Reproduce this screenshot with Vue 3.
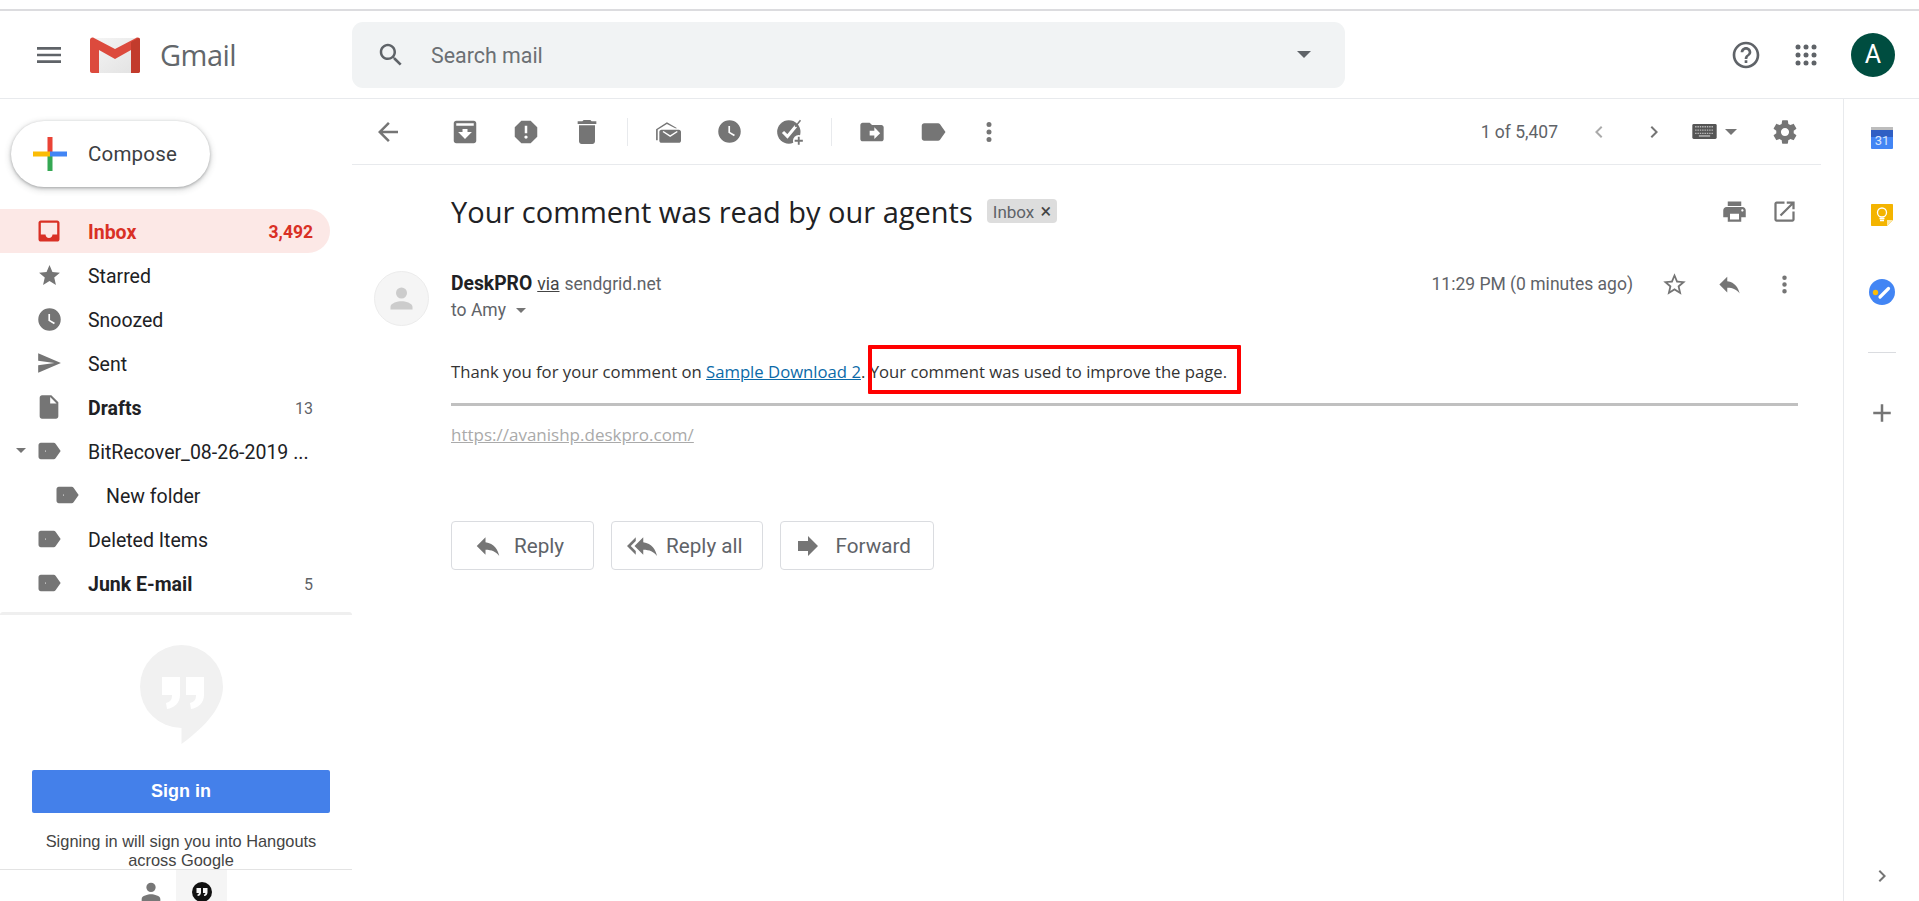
<script setup>
const paths = {
  menu: "M3 18h18v-2H3v2zm0-5h18v-2H3v2zm0-7v2h18V6H3z",
  search: "M15.5 14h-.79l-.28-.27C15.41 12.59 16 11.11 16 9.5 16 5.91 13.09 3 9.5 3S3 5.91 3 9.5 5.91 16 9.5 16c1.61 0 3.09-.59 4.23-1.57l.27.28v.79l5 4.99L20.49 19l-4.99-5zm-6 0C7.01 14 5 11.99 5 9.5S7.01 5 9.5 5 14 7.01 14 9.5 11.99 14 9.5 14z",
  help: "M11 18h2v-2h-2v2zm1-16C6.48 2 2 6.48 2 12s4.48 10 10 10 10-4.48 10-10S17.52 2 12 2zm0 18c-4.41 0-8-3.59-8-8s3.59-8 8-8 8 3.59 8 8-3.59 8-8 8zm0-14c-2.21 0-4 1.79-4 4h2c0-1.1.9-2 2-2s2 .9 2 2c0 2-3 1.75-3 5h2c0-2.25 3-2.5 3-5 0-2.21-1.79-4-4-4z",
  back: "M20 11H7.83l5.59-5.59L12 4l-8 8 8 8 1.41-1.41L7.83 13H20v-2z",
  archive: "M5 3h14c1.1 0 2 .9 2 2v14c0 1.1-.9 2-2 2H5c-1.1 0-2-.9-2-2V5c0-1.1.9-2 2-2zm0 2v2h14V5H5zm7 12.5l5.5-5.5H14V9.5h-4V12H6.5l5.5 5.5z",
  report: "M15.73 3H8.27L3 8.27v7.46L8.27 21h7.46L21 15.73V8.27L15.73 3zM12 17.3c-.72 0-1.3-.58-1.3-1.3 0-.72.58-1.3 1.3-1.3.72 0 1.3.58 1.3 1.3 0 .72-.58 1.3-1.3 1.3zm1-4.3h-2V7h2v6z",
  trash: "M6 19c0 1.1.9 2 2 2h8c1.1 0 2-.9 2-2V7H6v12zM19 4h-3.5l-1-1h-5l-1 1H5v2h14V4z",
  unread: "M6 10h16c1.1 0 2 .9 2 2v8c0 1.1-.9 2-2 2H6c-1.1 0-2-.9-2-2v-8c0-1.1.9-2 2-2zm1 2l7 4.5 7-4.5-.8-.9-6.2 3.9-6.2-3.9L7 12zM1 9.5L11 3l9.5 5.5h-1.8L11 4.5 2.5 10v9.5H1V9.5z",
  clock: "M12 2a10 10 0 1 0 0 20 10 10 0 0 0 0-20zm4 14.2l-5-3V7h1.5v5.4l4.3 2.5-.8 1.3z",
  task: "M11 2a10 10 0 1 0 0 20 10 10 0 0 0 0-20z",
  move: "M20 6h-8l-2-2H4c-1.1 0-1.99.9-1.99 2L2 18c0 1.1.9 2 2 2h16c1.1 0 2-.9 2-2V8c0-1.1-.9-2-2-2zm-6 12v-3h-4v-4h4V8l5 5-5 5z",
  label: "M17.63 5.84C17.27 5.33 16.67 5 16 5L5 5.01C3.9 5.01 3 5.9 3 7v10c0 1.1.9 1.99 2 1.99L16 19c.67 0 1.27-.33 1.63-.84L22 12l-4.37-6.16z",
  more: "M12 8a2 2 0 1 0 0-4 2 2 0 0 0 0 4zm0 2a2 2 0 1 0 0 4 2 2 0 0 0 0-4zm0 6a2 2 0 1 0 0 4 2 2 0 0 0 0-4z",
  prev: "M15.41 7.41L14 6l-6 6 6 6 1.41-1.41L10.83 12z",
  next: "M10 6L8.59 7.41 13.17 12l-4.58 4.59L10 18l6-6z",
  gear: "M19.43 12.98c.04-.32.07-.64.07-.98s-.03-.66-.07-.98l2.11-1.65c.19-.15.24-.42.12-.64l-2-3.46c-.12-.22-.39-.3-.61-.22l-2.49 1c-.52-.4-1.08-.73-1.69-.98l-.38-2.65C14.46 2.18 14.25 2 14 2h-4c-.25 0-.46.18-.49.42l-.38 2.65c-.61.25-1.17.59-1.69.98l-2.49-1c-.23-.09-.49 0-.61.22l-2 3.46c-.13.22-.07.49.12.64l2.11 1.65c-.04.32-.07.65-.07.98s.03.66.07.98l-2.11 1.65c-.19.15-.24.42-.12.64l2 3.46c.12.22.39.3.61.22l2.49-1c.52.4 1.08.73 1.69.98l.38 2.65c.03.24.24.42.49.42h4c.25 0 .46-.18.49-.42l.38-2.65c.61-.25 1.17-.59 1.69-.98l2.49 1c.23.09.49 0 .61-.22l2-3.46c.12-.22.07-.49-.12-.64l-2.11-1.65zM12 15.5c-1.93 0-3.5-1.57-3.5-3.5s1.57-3.5 3.5-3.5 3.5 1.57 3.5 3.5-1.57 3.5-3.5 3.5z",
  print: "M19 8H5c-1.66 0-3 1.34-3 3v6h4v4h12v-4h4v-6c0-1.66-1.34-3-3-3zm-3 11H8v-5h8v5zm3-7c-.55 0-1-.45-1-1s.45-1 1-1 1 .45 1 1-.45 1-1 1zm-1-9H6v4h12V3z",
  open: "M19 19H5V5h7V3H5c-1.11 0-2 .9-2 2v14c0 1.1.89 2 2 2h14c1.1 0 2-.9 2-2v-7h-2v7zM14 3v2h3.59l-9.83 9.83 1.41 1.41L19 6.41V10h2V3h-7z",
  starLine: "M22 9.24l-7.19-.62L12 2 9.19 8.63 2 9.24l5.46 4.73L5.82 21 12 17.27 18.18 21l-1.63-7.03L22 9.24zM12 15.4l-3.76 2.27 1-4.28-3.32-2.88 4.38-.38L12 6.1l1.71 4.04 4.38.38-3.32 2.88 1 4.28L12 15.4z",
  star: "M12 17.27L18.18 21l-1.64-7.03L22 9.24l-7.19-.61L12 2 9.19 8.63 2 9.24l5.46 4.73L5.82 21z",
  reply: "M10 9V5l-7 7 7 7v-4.1c5 0 8.5 1.6 11 5.1-1-5-4-10-11-11z",
  replyAll: "M7 8V5l-7 7 7 7v-3l-4-4 4-4zm6 1V5l-7 7 7 7v-4.1c5 0 8.5 1.6 11 5.1-1-5-4-10-11-11z",
  forward: "M12 8V4l8 8-8 8v-4H4V8z",
  inbox: "M19 3H5c-1.1 0-2 .9-2 2v14c0 1.1.9 2 2 2h14c1.1 0 2-.9 2-2V5c0-1.1-.9-2-2-2zm0 12h-4c0 1.66-1.35 3-3 3s-3-1.34-3-3H5V5h14v10z",
  send: "M2.01 21L23 12 2.01 3 2 10l15 2-15 2z",
  draft: "M6 2c-1.1 0-1.99.9-1.99 2L4 20c0 1.1.89 2 1.99 2H18c1.1 0 2-.9 2-2V8l-6-6H6zm7 7V3.5L18.5 9H13z",
  tag: "M17.63 5.84C17.27 5.33 16.67 5 16 5L5 5.01C3.9 5.01 3 5.9 3 7v10c0 1.1.9 1.99 2 1.99L16 19c.67 0 1.27-.33 1.63-.84L22 12l-4.37-6.16zM9 11.5a.5.5 0 1 0 0 1 .5.5 0 0 0 0-1z",
  plus: "M19 13h-6v6h-2v-6H5v-2h6V5h2v6h6v2z",
  person: "M12 12a4 4 0 1 0 0-8 4 4 0 0 0 0 8zm0 2c-2.7 0-8 1.3-8 4v2h16v-2c0-2.7-5.3-4-8-4z",
};

const folders = [
  { name: "Inbox", icon: "inbox", count: "3,492", active: true, bold: true },
  { name: "Starred", icon: "star" },
  { name: "Snoozed", icon: "clock" },
  { name: "Sent", icon: "send" },
  { name: "Drafts", icon: "draft", count: "13", bold: true },
  { name: "BitRecover_08-26-2019 ...", icon: "tag", caret: true },
  { name: "New folder", icon: "tag", nested: true },
  { name: "Deleted Items", icon: "tag" },
  { name: "Junk E-mail", icon: "tag", count: "5", bold: true },
];

const toolGroups = [
  ["archive", "report", "trash"],
  ["unread", "clock", "task"],
  ["move", "label", "more"],
];

const actions = [
  { name: "Reply", icon: "reply", kind: "a-reply" },
  { name: "Reply all", icon: "replyAll", kind: "a-all" },
  { name: "Forward", icon: "forward", kind: "a-forward" },
];
</script>

<template>
  <div class="page">
    <div class="topline"></div>

    <header class="header">
      <div class="brand">
        <svg class="icon menu" viewBox="0 0 24 24"><path :d="paths.menu" /></svg>
        <svg class="logo" viewBox="0 0 50 36">
          <defs>
            <linearGradient id="env" x1="0" y1="0" x2="1" y2="1">
              <stop offset="0" stop-color="#f5f5f5" />
              <stop offset="1" stop-color="#e2e2e2" />
            </linearGradient>
          </defs>
          <rect x="1" y="1" width="48" height="35" rx="2" fill="url(#env)" />
          <path d="M0 3c0-2 2-3 4-2l21 11L46 1c2-1 4 0 4 2v31c0 1-1 2-2 2h-7V13L25 22 9 13v23H2c-1 0-2-1-2-2z" fill="#dc4a3d" />
          <path d="M41 13v23h7c1 0 2-1 2-2V3c0-1-.4-2-1.2-2.3L41 5z" fill="#c23b2c" />
        </svg>
        <span class="wordmark">Gmail</span>
      </div>

      <div class="search">
        <svg class="icon search-icon" viewBox="0 0 24 24"><path :d="paths.search" /></svg>
        <span class="search-text">Search mail</span>
        <span class="caret search-caret"></span>
      </div>

      <div class="account">
        <svg class="icon dark" viewBox="0 0 24 24"><path :d="paths.help" /></svg>
        <svg class="icon dark apps" viewBox="0 0 24 24">
          <g v-for="y in [4, 12, 20]" :key="y">
            <circle v-for="x in [4, 12, 20]" :key="x" :cx="x" :cy="y" r="2.5" />
          </g>
        </svg>
        <div class="avatar">A</div>
      </div>
    </header>

    <div class="body">
      <aside class="sidebar">
        <button class="compose">
          <svg class="compose-plus" viewBox="0 0 34 34">
            <rect x="14.5" y="0" width="5" height="17" fill="#ea4335" />
            <rect x="14.5" y="17" width="5" height="17" fill="#34a853" />
            <rect x="0" y="14.5" width="17" height="5" fill="#fbbc05" />
            <rect x="17" y="14.5" width="17" height="5" fill="#4285f4" />
          </svg>
          <span>Compose</span>
        </button>

        <nav class="folders">
          <div
            v-for="folder in folders"
            :key="folder.name"
            class="folder"
            :class="{ active: folder.active, bold: folder.bold, nested: folder.nested }"
          >
            <span v-if="folder.caret" class="caret folder-caret"></span>
            <span class="folder-icon">
              <svg class="icon" :class="folder.icon" viewBox="0 0 24 24"><path :d="paths[folder.icon]" fill-rule="evenodd" /></svg>
            </span>
            <span class="folder-name">{{ folder.name }}</span>
            <span v-if="folder.count" class="folder-count">{{ folder.count }}</span>
          </div>
        </nav>

        <div class="hangouts">
          <svg class="bubble" viewBox="0 0 83 99">
            <path d="M41.5 0a41.5 41.5 0 0 1 41.5 41.5C83 64 62 84 41.5 99V83A41.5 41.5 0 0 1 41.5 0z" fill="#f1f1f1" />
            <path d="M22 32h18v18c0 8-6 13-13 14l-1-6c4-1 6-3 6-8H22zM46 32h18v18c0 8-6 13-13 14l-1-6c4-1 6-3 6-8H46z" fill="#fff" />
          </svg>
          <button class="signin">Sign in</button>
          <p class="signin-note">Signing in will sign you into Hangouts across Google</p>
        </div>

        <div class="hangouts-tabs">
          <div class="tab">
            <svg class="tab-person" viewBox="0 0 24 24"><path :d="paths.person" /></svg>
          </div>
          <div class="tab selected">
            <svg class="tab-quote" viewBox="0 0 24 24">
              <circle cx="12" cy="12" r="10" fill="#111" />
              <path d="M6.5 8H11v4.5c0 2-1.3 3.3-3.3 3.6l-.4-1.5c1-.2 1.6-.8 1.6-1.6H6.500zM13 8h4.500v4.500c0 2-1.300 3.300-3.300 3.600l-.4-1.500c1-.2 1.600-.8 1.600-1.600H13z" fill="#f5f5f5" />
            </svg>
          </div>
        </div>
      </aside>

      <main class="main">
        <div class="toolbar">
          <button class="tool back"><svg class="icon" viewBox="0 0 24 24"><path :d="paths.back" /></svg></button>
          <template v-for="(group, i) in toolGroups" :key="i">
            <span v-if="i > 0" class="tool-sep"></span>
            <button v-for="name in group" :key="name" class="tool" :class="'tool-' + name">
              <svg class="icon" viewBox="0 0 24 24">
                <path :d="paths[name]" fill-rule="evenodd" />
                <g v-if="name === 'task'">
                  <path d="M6 12l3.800 3.800L17 7" fill="none" stroke="#fff" stroke-width="2.600" />
                  <path d="M16.500 7.500L21 2" fill="none" stroke="#757575" stroke-width="1.300" />
                  <circle cx="19.500" cy="19.500" r="5" fill="#fff" />
                  <path d="M18.700 16h1.600v2.700H23v1.600h-2.700V23h-1.600v-2.700H16v-1.600h2.700z" />
                </g>
              </svg>
            </button>
          </template>

          <div class="pager">
            <span class="pager-text">1 of 5,407</span>
            <svg class="icon faint pager-prev" viewBox="0 0 24 24"><path :d="paths.prev" /></svg>
            <svg class="icon pager-next" viewBox="0 0 24 24"><path :d="paths.next" /></svg>
            <svg class="keyboard" viewBox="0 0 26 16">
              <rect width="26" height="16" rx="1.5" fill="#555" />
              <path d="M3 3h20M3 6.500h20M3 10h20" stroke="#bbb" stroke-width="1.5" stroke-dasharray="1.500 1" fill="none" />
              <rect x="7" y="12" width="12" height="1.5" fill="#bbb" />
            </svg>
            <span class="caret keyboard-caret"></span>
            <svg class="icon gear" viewBox="0 0 24 24"><path :d="paths.gear" /></svg>
          </div>
        </div>

        <div class="mail">
          <div class="subject-row">
            <h1 class="subject">Your comment was read by our agents</h1>
            <span class="chip">Inbox <span class="chip-x">×</span></span>
            <div class="subject-actions">
              <svg class="icon" viewBox="0 0 24 24"><path :d="paths.print" /></svg>
              <svg class="icon" viewBox="0 0 24 24"><path :d="paths.open" /></svg>
            </div>
          </div>

          <div class="sender-row">
            <div class="sender-avatar">
              <svg viewBox="0 0 24 24"><path :d="paths.person" /></svg>
            </div>
            <div class="sender-info">
              <div class="sender-line">
                <b class="sender-name">DeskPRO</b>
                <u class="via">via</u>
                <span>sendgrid.net</span>
              </div>
              <div class="to-line">to Amy <span class="caret to-caret"></span></div>
            </div>
            <div class="sender-meta">
              <span class="time">11:29 PM (0 minutes ago)</span>
              <svg class="icon" viewBox="0 0 24 24"><path :d="paths.starLine" /></svg>
              <svg class="icon" viewBox="0 0 24 24"><path :d="paths.reply" /></svg>
              <svg class="icon" viewBox="0 0 24 24"><path :d="paths.more" /></svg>
            </div>
          </div>

          <div class="message">
            <p class="message-text">
              Thank you for your comment on <a href="#" class="link">Sample Download 2</a>.
              <span class="marked">Your comment was used to improve the page.<span class="red-box"></span></span>
            </p>
            <hr class="rule" />
            <a href="#" class="footer-link">https://avanishp.deskpro.com/</a>
          </div>

          <div class="actions">
            <button v-for="action in actions" :key="action.name" class="action" :class="action.kind">
              <svg class="icon" viewBox="0 0 24 24"><path :d="paths[action.icon]" /></svg>
              {{ action.name }}
            </button>
          </div>
        </div>
      </main>

      <aside class="rail">
        <svg class="rail-icon" viewBox="0 0 22 22">
          <rect y="0" width="22" height="4" fill="#bdbdbd" />
          <rect y="3" width="22" height="19" rx="1" fill="#4285f4" />
          <rect y="3" width="22" height="7" fill="#2f5fc4" />
          <text x="11" y="17.5" text-anchor="middle" class="cal-text">31</text>
        </svg>
        <svg class="rail-icon" viewBox="0 0 22 22">
          <path d="M1 0h20c.6 0 1 .4 1 1v15l-6 6H1c-.6 0-1-.4-1-1V1c0-.6.4-1 1-1z" fill="#f4b400" />
          <path d="M22 16l-6 6v-6z" fill="#fce8a8" />
          <circle cx="11" cy="8.5" r="4.5" fill="none" stroke="#fff" stroke-width="1.3" />
          <path d="M8.500 14.500h5M9 16.500h4" stroke="#fff" stroke-width="1.3" />
        </svg>
        <svg class="rail-icon task-icon" viewBox="0 0 26 26">
          <circle cx="13" cy="13" r="13" fill="#4285f4" />
          <circle cx="6.500" cy="13.500" r="2.700" fill="#fbbc05" />
          <path d="M11 18L19.500 9.500" stroke="#fff" stroke-width="3.200" stroke-linecap="round" />
        </svg>
        <span class="rail-sep"></span>
        <svg class="icon rail-plus" viewBox="0 0 24 24"><path :d="paths.plus" /></svg>
        <svg class="icon rail-next" viewBox="0 0 24 24"><path :d="paths.next" /></svg>
      </aside>
    </div>
  </div>
</template>

<style>
html, body {
  margin: 0;
  background: #fff;
  overflow: hidden;
}
</style>

<style scoped>
.page {
  height: 901px;
  display: flex;
  flex-direction: column;
  overflow: hidden;
  font-family: Roboto, "Liberation Sans", sans-serif;
  font-size: 19.5px;
  color: #202124;
}

.topline {
  margin-top: 9px;
  height: 2px;
  background: #dcdcdf;
  flex: none;
}

.icon {
  width: 24px;
  height: 24px;
  fill: #757575;
  flex: none;
}

.icon.dark {
  fill: #5f6368;
}

.icon.faint {
  fill: #aaa;
}

.caret {
  width: 0;
  height: 0;
  border-left: 6px solid transparent;
  border-right: 6px solid transparent;
  border-top: 6px solid #757575;
  flex: none;
}

button {
  font-family: inherit;
  background: none;
  border: none;
  padding: 0;
}

/* header */
.header {
  height: 87px;
  flex: none;
  display: flex;
  align-items: center;
  border-bottom: 1px solid #e8eaed;
}

.brand {
  width: 352px;
  flex: none;
  display: flex;
  align-items: center;
  padding-left: 33px;
  box-sizing: border-box;
}

.menu {
  width: 32px;
  height: 32px;
  fill: #5f6368;
}

.logo {
  width: 50px;
  height: 36px;
  margin-left: 25px;
}

.wordmark {
  margin-left: 20px;
  font-family: "Open Sans", sans-serif;
  font-size: 29px;
  color: #63676b;
  letter-spacing: -0.5px;
}

.search {
  width: 993px;
  height: 66px;
  flex: none;
  background: #f1f3f4;
  border-radius: 11px;
  display: flex;
  align-items: center;
  padding: 0 34px 0 24px;
  box-sizing: border-box;
}

.search-icon {
  width: 30px;
  height: 30px;
  fill: #5f6368;
}

.search-text {
  margin-left: 25px;
  padding-top: 2px;
  font-size: 21.4px;
  color: #6b6f73;
  flex: 1;
}

.search-caret {
  border-left-width: 7px;
  border-right-width: 7px;
  border-top-width: 7px;
  border-top-color: #5f6368;
}

.account {
  flex: 1;
  display: flex;
  align-items: center;
  padding-left: 385px;
}

.account .icon {
  width: 32px;
  height: 32px;
}

.account .apps {
  width: 24px;
  height: 24px;
  margin-left: 32px;
}

.avatar {
  width: 44px;
  height: 44px;
  border-radius: 50%;
  background: #004d40;
  color: #fff;
  font-size: 25px;
  display: flex;
  align-items: center;
  justify-content: center;
  margin-left: 33px;
}

.body {
  flex: 1;
  min-height: 0;
  display: flex;
}

/* sidebar */
.sidebar {
  width: 352px;
  flex: none;
  display: flex;
  flex-direction: column;
  min-height: 0;
}

.compose {
  width: 199px;
  height: 66px;
  margin: 22px 0 22px 11px;
  flex: none;
  border-radius: 33px;
  background: #fff;
  box-shadow: 0 1px 3px rgba(60, 64, 67, 0.35), 0 2px 6px 1px rgba(60, 64, 67, 0.2);
  display: flex;
  align-items: center;
  padding-left: 22px;
  font-size: 20.5px;
  font-weight: 400;
  letter-spacing: 0.2px;
  color: #3c4043;
}

.compose-plus {
  width: 34px;
  height: 34px;
  margin-right: 21px;
}

.folders {
  flex: none;
}

.folder {
  position: relative;
  width: 330px;
  height: 44px;
  display: flex;
  align-items: center;
  box-sizing: border-box;
  padding: 0 17px 0 35px;
  border-radius: 0 22px 22px 0;
}

.folder-icon {
  width: 28px;
  display: flex;
  justify-content: center;
  flex: none;
}

.folder-icon .icon {
  width: 28px;
  height: 28px;
}

.folder-icon .icon.star {
  width: 25px;
  height: 25px;
}

.folder-icon .icon.clock {
  width: 27px;
  height: 27px;
}

.folder-icon .icon.send {
  width: 26px;
  height: 26px;
}

.folder-name {
  margin-left: 25px;
  padding-top: 2px;
  flex: 1;
  white-space: nowrap;
}

.folder-count {
  font-size: 16px;
  padding-top: 2px;
  color: #5f6368;
}

.folder.bold {
  font-weight: 700;
}

.folder.bold .folder-count {
  font-weight: 400;
}

.folder.nested {
  padding-left: 53px;
}

.folder.active {
  background: #fce8e6;
  color: #d93025;
}

.folder.active .icon {
  fill: #d93025;
}

.folder.active .folder-count {
  color: #d93025;
  font-size: 17.5px;
  font-weight: 700;
}

.folder-caret {
  position: absolute;
  left: 16px;
  top: 19px;
  border-left-width: 5px;
  border-right-width: 5px;
  border-top-width: 5px;
}

.hangouts {
  flex: 1;
  min-height: 0;
  overflow: hidden;
  margin-top: 7px;
  border-top: 3px solid #efefef;
  border-radius: 3px 3px 0 0;
  display: flex;
  flex-direction: column;
  align-items: center;
  font-family: "Liberation Sans", Arial, sans-serif;
  padding: 30px 0 0 10px;
}

.bubble {
  width: 83px;
  height: 99px;
  flex: none;
}

.signin {
  width: 298px;
  height: 43px;
  flex: none;
  margin: 26px 0 19px 0;
  background: #4480ea;
  color: #fff;
  border-radius: 2px;
  font-weight: 700;
  font-size: 18px;
}

.signin-note {
  margin: 0;
  width: 300px;
  text-align: center;
  font-size: 16.4px;
  line-height: 19px;
  color: #444;
  flex: none;
}

.hangouts-tabs {
  height: 32px;
  flex: none;
  border-top: 1px solid #e3e3e3;
  display: flex;
  justify-content: center;
  box-sizing: border-box;
  overflow: hidden;
}

.tab {
  width: 51px;
  display: flex;
  justify-content: center;
}

.tab.selected {
  background: #f5f5f5;
}

.tab-person {
  width: 28px;
  height: 28px;
  fill: #777;
  margin-top: 8px;
}

.tab-quote {
  width: 24px;
  height: 24px;
  margin-top: 10px;
}

/* main */
.main {
  flex: 1;
  min-width: 0;
  display: flex;
  flex-direction: column;
  padding-right: 22px;
}

.toolbar {
  height: 65px;
  flex: none;
  display: flex;
  align-items: center;
  padding-left: 5.5px;
  border-bottom: 1px solid #e8eaed;
}

.tool {
  width: 61px;
  height: 36px;
  display: flex;
  align-items: center;
  justify-content: center;
  flex: none;
}

.tool .icon {
  width: 30px;
  height: 30px;
}

.tool.tool-trash .icon {
  width: 32px;
  height: 32px;
}

.tool.tool-unread .icon {
  width: 26px;
  height: 26px;
}

.tool.tool-clock .icon {
  width: 27px;
  height: 27px;
}

.tool.tool-task .icon {
  width: 28px;
  height: 28px;
}

.tool.tool-move .icon {
  width: 28px;
  height: 28px;
}

.tool.tool-more {
  margin-left: -5px;
}

.tool.back {
  margin-right: 16px;
}

.tool-sep {
  width: 1px;
  height: 28px;
  background: #e8eaed;
  margin: 0 9.7px;
  flex: none;
}

.pager {
  margin-left: auto;
  display: flex;
  align-items: center;
  padding-right: 22px;
}

.pager-text {
  font-size: 17.5px;
  color: #5f6368;
}

.pager-prev {
  margin-left: 29px;
}

.pager-next {
  margin-left: 31px;
}

.keyboard {
  width: 25px;
  height: 15px;
  margin-left: 26px;
}

.keyboard-caret {
  margin-left: 8px;
}

.gear {
  margin-left: 34px;
  width: 28px;
  height: 28px;
}

.mail {
  flex: 1;
  padding-left: 99px;
  padding-right: 23px;
  min-height: 0;
}

.subject-row {
  height: 92px;
  padding-bottom: 4px;
  display: flex;
  align-items: center;
}

.subject {
  margin: 0;
  font-family: "Open Sans", sans-serif;
  font-size: 29px;
  font-weight: 400;
  color: #202124;
  white-space: nowrap;
}

.chip {
  margin-left: 14px;
  background: #ddd;
  color: #5f6368;
  border-radius: 4px;
  font-size: 17px;
  height: 24px;
  line-height: 24px;
  padding: 0 6px;
}

.chip-x {
  color: #444;
  font-size: 20px;
  margin-left: 2px;
}

.subject-actions {
  margin-left: auto;
  display: flex;
  align-items: center;
  gap: 23px;
}

.subject-actions .icon {
  width: 27px;
  height: 27px;
}

.sender-row {
  height: 81px;
  display: flex;
}

.sender-avatar {
  width: 55px;
  height: 55px;
  margin: 10px 22px 0 -77px;
  border-radius: 50%;
  background: #f5f5f5;
  border: 1px solid #ececec;
  box-sizing: border-box;
  display: flex;
  align-items: center;
  justify-content: center;
  flex: none;
}

.sender-avatar svg {
  width: 33px;
  height: 33px;
  fill: #ccc;
}

.sender-info {
  padding-top: 11px;
  flex: 1;
}

.sender-line {
  font-size: 17.5px;
  line-height: 24px;
  color: #5f6368;
  display: flex;
  gap: 5px;
  align-items: baseline;
}

.sender-name {
  font-size: 19.3px;
  color: #202124;
}

.via {
  color: #444;
}

.to-line {
  font-size: 17.5px;
  line-height: 24px;
  margin-top: 2px;
  color: #5f6368;
  display: flex;
  align-items: center;
}

.to-caret {
  margin-left: 10px;
  border-left-width: 5px;
  border-right-width: 5px;
  border-top-width: 5px;
}

.sender-meta {
  display: flex;
  align-items: flex-start;
  gap: 28px;
  padding-top: 10px;
}

.sender-meta .icon {
  width: 27px;
  height: 27px;
}

.time {
  font-size: 17.5px;
  line-height: 24px;
  margin-top: 1px;
  color: #5f6368;
}

.message {
  font-family: "Open Sans", sans-serif;
  font-size: 16.7px;
  color: #333;
  padding-top: 18px;
}

.message-text {
  margin: 0;
  line-height: 24px;
  white-space: nowrap;
}

.link {
  color: #0b6aa8;
}

.marked {
  position: relative;
}

.red-box {
  position: absolute;
  left: -2px;
  top: -15px;
  width: 373px;
  height: 49px;
  border: 4px solid #f00;
  box-sizing: border-box;
  border-radius: 1px;
}

.rule {
  margin: 19px 0 0;
  border: none;
  height: 3px;
  background: #c0c0c0;
}

.footer-link {
  display: block;
  width: max-content;
  margin-top: 17px;
  color: #aaa;
  font-size: 17px;
  line-height: 24px;
}

.actions {
  margin-top: 74px;
  display: flex;
  gap: 17px;
}

.action {
  height: 49px;
  border: 1px solid #dadce0;
  border-radius: 4px;
  display: flex;
  align-items: center;
  font-size: 20.67px;
  color: #5f6368;
  background: #fff;
}

.action .icon {
  width: 30px;
  height: 30px;
}

.a-reply {
  padding: 0 29px 0 21px;
  gap: 11px;
}

.a-all {
  padding: 0 19px 0 15px;
  gap: 9px;
}

.a-forward {
  padding: 0 22px 0 12px;
  gap: 13px;
}

/* right rail */
.rail {
  width: 76px;
  flex: none;
  border-left: 1px solid #e8eaed;
  display: flex;
  flex-direction: column;
  align-items: center;
  padding-top: 28px;
  box-sizing: border-box;
}

.rail-icon {
  width: 22px;
  height: 22px;
  margin-bottom: 55px;
  flex: none;
}

.rail-icon:nth-child(2) {
  margin-bottom: 53px;
}

.task-icon {
  width: 26px;
  height: 26px;
  margin-bottom: 47px;
}

.cal-text {
  font-family: Roboto, sans-serif;
  font-size: 13px;
  fill: #dbe6fb;
}

.rail-sep {
  width: 28px;
  height: 1px;
  background: #dadce0;
  flex: none;
}

.rail-plus {
  margin-top: 45px;
  width: 30px;
  height: 30px;
}

.rail-next {
  margin-top: auto;
  margin-bottom: 13px;
}
</style>
